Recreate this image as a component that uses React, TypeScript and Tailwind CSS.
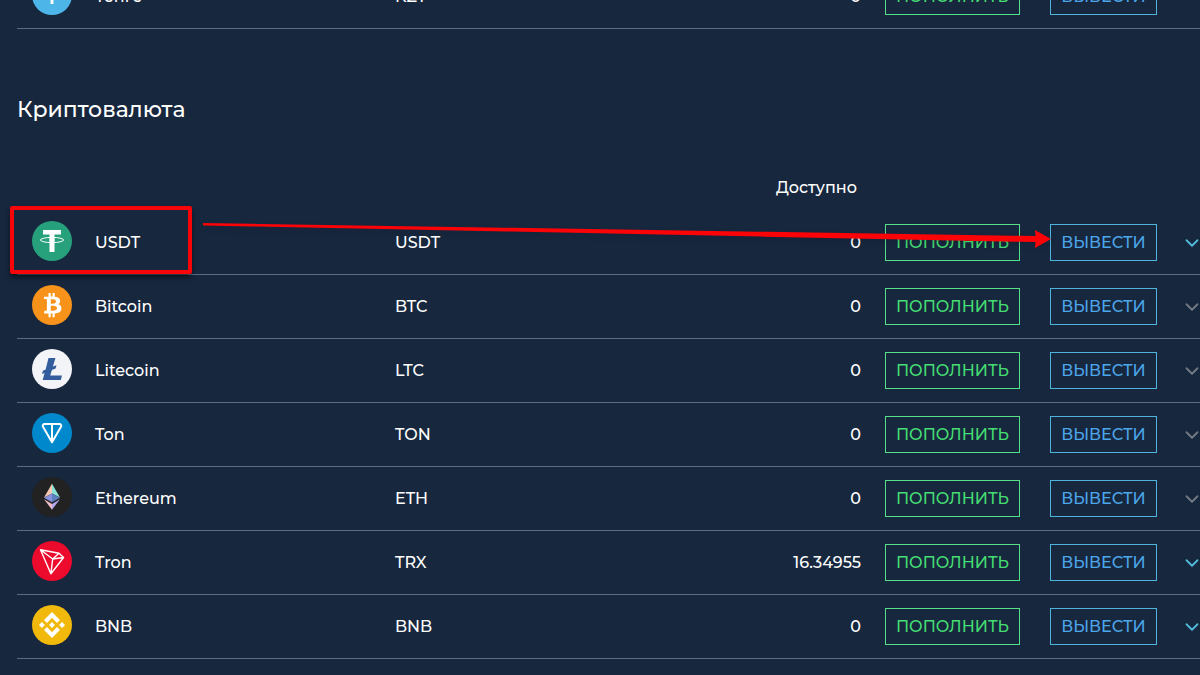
import type { ReactNode } from 'react';
import { ChevronDown } from 'lucide-react';
import { SiBinance } from 'react-icons/si';

type Currency = {
  name: string;
  code: string;
  balance: string;
  icon: ReactNode;
  expandable?: boolean;
};

function CoinIcon({ color, children }: { color: string; children: ReactNode }) {
  return (
    <svg viewBox="0 0 40 40" className="block size-10" aria-hidden="true">
      <circle cx="20" cy="20" r="20" fill={color} />
      {children}
    </svg>
  );
}

const tenge = (
  <CoinIcon color="#4db5e8">
    <path d="M11 9h18M11 14h18M20 14v15" stroke="#fff" strokeWidth="3" />
  </CoinIcon>
);

const tether = (
  <CoinIcon color="#27a17c">
    <path d="M11 9h18v4.5h-6.5V31h-5V13.500H11z" fill="#fff" />
    <ellipse cx="20" cy="19" rx="11.600" ry="2.600" fill="none" stroke="#fff" strokeWidth="1" />
    <path d="M17.500 17.500h5v3h-5z" fill="#fff" />
  </CoinIcon>
);

const bitcoin = (
  <CoinIcon color="#f7931a">
    <path
      transform="rotate(-14 20 20) scale(1.25)"
      fill="#fff"
      d="M23.189 14.02c.314-2.096-1.283-3.223-3.465-3.975l.708-2.84-1.728-.43-.69 2.765c-.454-.114-.92-.22-1.385-.326l.695-2.783L15.596 6l-.708 2.839c-.376-.086-.746-.17-1.104-.26l.002-.009-2.384-.595-.46 1.846s1.283.294 1.256.312c.7.175.826.638.805 1.006l-.806 3.235c.048.012.11.03.18.057l-.183-.045-1.13 4.532c-.086.212-.303.531-.793.41.018.025-1.256-.313-1.256-.313l-.858 1.978 2.25.561c.418.105.828.215 1.231.318l-.715 2.872 1.727.43.708-2.84c.472.127.93.245 1.378.357l-.706 2.828 1.728.43.715-2.866c2.948.558 5.164.333 6.097-2.333.752-2.146-.037-3.385-1.588-4.192 1.13-.26 1.98-1.003 2.207-2.538zm-3.95 5.538c-.533 2.147-4.148.986-5.32.695l.95-3.805c1.172.293 4.929.872 4.37 3.11zm.535-5.569c-.487 1.953-3.495.96-4.47.717l.86-3.45c.975.243 4.118.696 3.61 2.733z"
    />
  </CoinIcon>
);

const litecoin = (
  <CoinIcon color="#f3f4f8">
    <path
      d="M16.500 9H23.500l-2.600 8.600 3.600-1.400-.9 3.300-3.700 1.500-1.700 5.600H30L28.800 31H10.700l1.900-7-2.600 1 .9-3.300 2.700-1.100z"
      fill="#345d9d"
    />
  </CoinIcon>
);

const ton = (
  <CoinIcon color="#0088cc">
    <path
      d="M12.600 11h14.800c1.500 0 2.300 1.500 1.600 2.800L20 29.300l-9-15.500C10.300 12.500 11.100 11 12.600 11zM20 11v18"
      fill="none"
      stroke="#fff"
      strokeWidth="2"
      strokeLinejoin="round"
    />
  </CoinIcon>
);

const ethereum = (
  <CoinIcon color="#222222">
    <path d="M20 6.700v9.800l-8 4z" fill="#f3c9b4" />
    <path d="M20 6.700v9.800l8 4z" fill="#8be3d7" />
    <path d="M20 16.500v8.800l-8-4.600z" fill="#8a92e0" />
    <path d="M20 16.500v8.800l8-4.600z" fill="#5c7fbf" />
    <path d="M12 22.300l8 4.600v5.900z" fill="#efbdc6" />
    <path d="M28 22.300l-8 4.600v5.900z" fill="#b3a4ec" />
  </CoinIcon>
);

const tron = (
  <CoinIcon color="#ec0a2d">
    <path
      d="M8.500 8.800l18.500 3.400 4.600 4.300L18.900 32.700zM8.500 8.800L20.700 18l6.300-5.800M20.700 18l10.900-1.500M20.700 18l-1.800 14.700"
      fill="none"
      stroke="#fff"
      strokeWidth="1.400"
      strokeLinejoin="round"
    />
  </CoinIcon>
);

const bnb = (
  <CoinIcon color="#f0b90b">
    <SiBinance x="7" y="7" size={26} color="#fff" />
  </CoinIcon>
);

const fiat: Currency[] = [{ name: 'Тенге', code: 'KZT', balance: '0', icon: tenge }];

const crypto: Currency[] = [
  { name: 'USDT', code: 'USDT', balance: '0', icon: tether, expandable: true },
  { name: 'Bitcoin', code: 'BTC', balance: '0', icon: bitcoin },
  { name: 'Litecoin', code: 'LTC', balance: '0', icon: litecoin },
  { name: 'Ton', code: 'TON', balance: '0', icon: ton },
  { name: 'Ethereum', code: 'ETH', balance: '0', icon: ethereum },
  { name: 'Tron', code: 'TRX', balance: '16.34955', icon: tron, expandable: true },
  { name: 'BNB', code: 'BNB', balance: '0', icon: bnb, expandable: true },
];

function Columns() {
  return (
    <colgroup>
      <col className="w-[78px]" />
      <col className="w-[300px]" />
      <col />
      <col className="w-40" />
      <col className="w-[165px]" />
      <col className="w-[135px]" />
      <col className="w-[15px]" />
    </colgroup>
  );
}

function CurrencyRow({ currency, chevron = true }: { currency: Currency; chevron?: boolean }) {
  const { name, code, balance, icon, expandable } = currency;
  return (
    <tr className="h-16 *:border-b *:border-[#5a6c82]">
      <td className="pb-[3px] pl-[15px]">{icon}</td>
      <td>{name}</td>
      <td>{code}</td>
      <td className="pr-6 text-right">{balance}</td>
      <td>
        <button type="button" className="block h-[37px] w-[135px] border border-[#55e08a] text-center text-[#45dd72]">
          ПОПОЛНИТЬ
        </button>
      </td>
      <td>
        <button type="button" className="block h-[37px] w-[107px] border border-[#4fb3dc] text-center text-[#4da6ea]">
          ВЫВЕСТИ
        </button>
      </td>
      <td>
        {chevron && (
          <button type="button" aria-label={name} className="block">
            <ChevronDown
              className={expandable ? '-ml-1 size-[22px] text-[#4fb9dc]' : '-ml-1 size-[22px] text-[#727b86]'}
              strokeWidth={2}
            />
          </button>
        )}
      </td>
    </tr>
  );
}

// Frame round the first row's name and the arrow to its withdraw button
function Highlight() {
  return (
    <>
      <div className="pointer-events-none absolute top-[41px] -left-[7px] h-[68px] w-[182px] rounded-xs border-4 border-[#f80509] shadow-md shadow-black/50" />
      <div className="pointer-events-none absolute top-14 right-[149px] left-[186px] flex h-7 drop-shadow-md">
        <svg viewBox="0 0 100 28" preserveAspectRatio="none" className="h-7 min-w-0 flex-1" aria-hidden="true">
          <path d="M0 2L100 15v6L0 4.500z" fill="#fb0307" />
        </svg>
        <svg viewBox="0 0 17 28" className="h-7 w-[17px]" aria-hidden="true">
          <path d="M0 15h1.500L1 9l16 9L1 27l.5-6H0z" fill="#fb0307" />
        </svg>
      </div>
    </>
  );
}

function App() {
  return (
    <main className="min-h-screen overflow-hidden bg-[#17273e] pl-[17px] font-['Montserrat','Inter',sans-serif] text-base font-medium text-white">
      <table className="-mt-[35px] w-full table-fixed border-separate border-spacing-0">
        <Columns />
        <tbody>
          {fiat.map((currency) => (
            <CurrencyRow key={currency.code} currency={currency} chevron={false} />
          ))}
        </tbody>
      </table>

      <h2 className="mt-[65px] text-[22px] leading-8 font-medium">Криптовалюта</h2>

      <div className="relative mt-[39px]">
        <table className="w-full table-fixed border-separate border-spacing-0">
          <Columns />
          <thead>
            <tr className="h-[46px]">
              <td colSpan={3} />
              <th scope="col" className="pr-7 text-right font-medium">
                Доступно
              </th>
              <td colSpan={3} />
            </tr>
          </thead>
          <tbody>
            {crypto.map((currency) => (
              <CurrencyRow key={currency.code} currency={currency} />
            ))}
          </tbody>
        </table>
        <Highlight />
      </div>
    </main>
  );
}

export default App;
